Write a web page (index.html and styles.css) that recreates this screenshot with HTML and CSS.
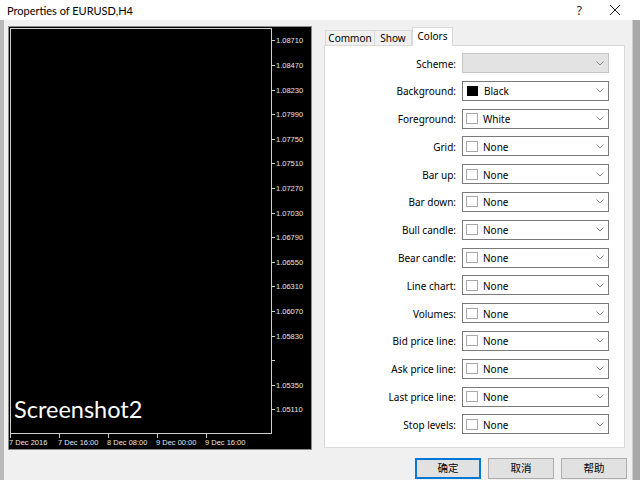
FILE: index.html
```html
<!DOCTYPE html>
<html>
<head>
<meta charset="utf-8">
<link rel="stylesheet" href="styles.css">
</head>
<body>
<div class="window">
  <div class="titlebar">
    <span class="title">Properties of EURUSD,H4</span>
    <span class="tb-btns">
      <span class="tb-help">?</span>
      <svg class="tb-close" width="12" height="12" viewBox="0 0 12 12"><path d="M1 1L11 11M11 1L1 11" stroke="#222" stroke-width="1" fill="none"/></svg>
    </span>
  </div>
  <div class="frame">
    <div class="edge-l"></div>
    <div class="content">
      <div class="main">
        <div class="chart">
          <div class="plot"><span class="watermark">Screenshot2</span></div>
          <div class="price-axis">
            <div class="pr"><i></i><span>1.08710</span></div>
            <div class="pr"><i></i><span>1.08470</span></div>
            <div class="pr"><i></i><span>1.08230</span></div>
            <div class="pr"><i></i><span>1.07990</span></div>
            <div class="pr"><i></i><span>1.07750</span></div>
            <div class="pr"><i></i><span>1.07510</span></div>
            <div class="pr"><i></i><span>1.07270</span></div>
            <div class="pr"><i></i><span>1.07030</span></div>
            <div class="pr"><i></i><span>1.06790</span></div>
            <div class="pr"><i></i><span>1.06550</span></div>
            <div class="pr"><i></i><span>1.06310</span></div>
            <div class="pr"><i></i><span>1.06070</span></div>
            <div class="pr"><i></i><span>1.05830</span></div>
            <div class="pr"><i></i><span></span></div>
            <div class="pr"><i></i><span>1.05350</span></div>
            <div class="pr"><i></i><span>1.05110</span></div>
          </div>
          <div class="time-axis">
            <div class="tm"><i></i><span>7 Dec 2016</span></div>
            <div class="tm"><i></i><span>7 Dec 16:00</span></div>
            <div class="tm"><i></i><span>8 Dec 08:00</span></div>
            <div class="tm"><i></i><span>9 Dec 00:00</span></div>
            <div class="tm"><i></i><span>9 Dec 16:00</span></div>
          </div>
        </div>
        <div class="props">
          <div class="tabs">
            <div class="tab">Common</div>
            <div class="tab">Show</div>
            <div class="tab active">Colors</div>
          </div>
          <div class="panel">
            <label>Scheme:</label>
            <div class="select disabled"><span class="val"></span><svg class="chev" width="8" height="5" viewBox="0 0 8 5"><path d="M0.5 0.5L4 4L7.5 0.5" stroke="#8a8a8a" fill="none"/></svg></div>
            <label>Background:</label>
            <div class="select"><span class="sw black"></span><span class="val">Black</span><svg class="chev" width="8" height="5" viewBox="0 0 8 5"><path d="M0.5 0.5L4 4L7.5 0.5" stroke="#8a8a8a" fill="none"/></svg></div>
            <label>Foreground:</label>
            <div class="select"><span class="sw"></span><span class="val">White</span><svg class="chev" width="8" height="5" viewBox="0 0 8 5"><path d="M0.5 0.5L4 4L7.5 0.5" stroke="#8a8a8a" fill="none"/></svg></div>
            <label>Grid:</label>
            <div class="select"><span class="sw"></span><span class="val">None</span><svg class="chev" width="8" height="5" viewBox="0 0 8 5"><path d="M0.5 0.5L4 4L7.5 0.5" stroke="#8a8a8a" fill="none"/></svg></div>
            <label>Bar up:</label>
            <div class="select"><span class="sw"></span><span class="val">None</span><svg class="chev" width="8" height="5" viewBox="0 0 8 5"><path d="M0.5 0.5L4 4L7.5 0.5" stroke="#8a8a8a" fill="none"/></svg></div>
            <label>Bar down:</label>
            <div class="select"><span class="sw"></span><span class="val">None</span><svg class="chev" width="8" height="5" viewBox="0 0 8 5"><path d="M0.5 0.5L4 4L7.5 0.5" stroke="#8a8a8a" fill="none"/></svg></div>
            <label>Bull candle:</label>
            <div class="select"><span class="sw"></span><span class="val">None</span><svg class="chev" width="8" height="5" viewBox="0 0 8 5"><path d="M0.5 0.5L4 4L7.5 0.5" stroke="#8a8a8a" fill="none"/></svg></div>
            <label>Bear candle:</label>
            <div class="select"><span class="sw"></span><span class="val">None</span><svg class="chev" width="8" height="5" viewBox="0 0 8 5"><path d="M0.5 0.5L4 4L7.5 0.5" stroke="#8a8a8a" fill="none"/></svg></div>
            <label>Line chart:</label>
            <div class="select"><span class="sw"></span><span class="val">None</span><svg class="chev" width="8" height="5" viewBox="0 0 8 5"><path d="M0.5 0.5L4 4L7.5 0.5" stroke="#8a8a8a" fill="none"/></svg></div>
            <label>Volumes:</label>
            <div class="select"><span class="sw"></span><span class="val">None</span><svg class="chev" width="8" height="5" viewBox="0 0 8 5"><path d="M0.5 0.5L4 4L7.5 0.5" stroke="#8a8a8a" fill="none"/></svg></div>
            <label>Bid price line:</label>
            <div class="select"><span class="sw"></span><span class="val">None</span><svg class="chev" width="8" height="5" viewBox="0 0 8 5"><path d="M0.5 0.5L4 4L7.5 0.5" stroke="#8a8a8a" fill="none"/></svg></div>
            <label>Ask price line:</label>
            <div class="select"><span class="sw"></span><span class="val">None</span><svg class="chev" width="8" height="5" viewBox="0 0 8 5"><path d="M0.5 0.5L4 4L7.5 0.5" stroke="#8a8a8a" fill="none"/></svg></div>
            <label>Last price line:</label>
            <div class="select"><span class="sw"></span><span class="val">None</span><svg class="chev" width="8" height="5" viewBox="0 0 8 5"><path d="M0.5 0.5L4 4L7.5 0.5" stroke="#8a8a8a" fill="none"/></svg></div>
            <label>Stop levels:</label>
            <div class="select"><span class="sw"></span><span class="val">None</span><svg class="chev" width="8" height="5" viewBox="0 0 8 5"><path d="M0.5 0.5L4 4L7.5 0.5" stroke="#8a8a8a" fill="none"/></svg></div>
          </div>
        </div>
      </div>
      <div class="buttons">
        <button class="btn default">确定</button>
        <button class="btn">取消</button>
        <button class="btn">帮助</button>
      </div>
    </div>
    <div class="edge-r"></div>
  </div>
</div>
</body>
</html>
```

FILE: styles.css
```css
* { box-sizing: border-box; }
html, body { margin: 0; padding: 0; }
body {
  width: 640px;
  height: 480px;
  overflow: hidden;
  background: #f0f0f0;
  font-family: "Noto Sans", "Liberation Sans", sans-serif;
  color: #000;
}
.window { display: flex; flex-direction: column; width: 640px; height: 480px; }
.titlebar {
  height: 20px;
  background: #fff;
  display: flex;
  align-items: center;
  justify-content: space-between;
  padding-left: 7px;
}
.title { font-family: "Lato", "Noto Sans", sans-serif; font-size: 11px; color: #000; }
.tb-btns { display: flex; align-items: center; }
.tb-help { font-size: 12px; margin-right: 27px; color: #222; }
.tb-close { margin-right: 19px; }
.frame { flex: 1; display: flex; }
.edge-l { width: 4px; background: #b9b9b9; }
.edge-r { width: 8px; background: #a9a9a9; border-left: 1px solid #d0d0d0; }
.content {
  flex: 1;
  display: flex;
  flex-direction: column;
  padding: 6px 0 0 4px;
}
.main { display: flex; align-items: flex-start; }

/* chart */
.chart {
  width: 304px;
  height: 424px;
  background: #000;
  border: 1px solid #8c8c8c;
  padding: 1px;
  display: grid;
  grid-template-columns: 262px 1fr;
  grid-template-rows: 406px 1fr;
  font-family: "Liberation Sans", sans-serif;
  font-size: 7.5px;
  color: #e6e6e6;
}
.plot {
  border: 1px solid #cfcfcf;
  position: relative;
}
.watermark {
  position: absolute;
  left: 3px;
  bottom: 12px;
  font-family: "Lato", "Open Sans", sans-serif;
  font-size: 23.5px;
  line-height: 24px;
  color: #fff;
}
.price-axis { display: flex; flex-direction: column; padding-top: 0.7px; }
.pr { height: 24.6px; display: flex; align-items: center; flex-shrink: 0; }
.pr i { display: block; width: 3px; height: 1px; background: #cfcfcf; margin-right: 1px; }
.time-axis { grid-column: 1 / 3; display: flex; }
.tm { width: 49px; display: flex; flex-direction: column; align-items: flex-start; }
.tm i { display: block; width: 1px; height: 4px; background: #cfcfcf; }
.tm span { margin-left: -1px; line-height: 9px; white-space: nowrap; }

/* properties */
.props { margin-left: 12px; width: 301px; display: flex; flex-direction: column; margin-top: 1px; }
.tabs { display: flex; align-items: flex-end; height: 18px; padding-left: 1px; font-size: 10px; position: relative; z-index: 1; }
.tab {
  height: 15px;
  border: 1px solid #d9d9d9;
  border-bottom: none;
  background: #f0f0f0;
  display: flex;
  align-items: center;
  justify-content: center;
  color: #000;
}
.tab:nth-child(1) { width: 50px; }
.tab:nth-child(2) { width: 37px; border-left: none; }
.tab.active {
  width: 41px;
  height: 19px;
  background: #fff;
  margin-bottom: -1px;
  border-left: 1px solid #d9d9d9;
  padding-bottom: 3px;
}
.panel {
  height: 403px;
  background: #fff;
  border: 1px solid #d9d9d9;
  padding-top: 7px;
  display: grid;
  grid-template-columns: 131px 147px;
  column-gap: 6px;
  row-gap: 7.8px;
  grid-auto-rows: 20px;
  align-content: start;
  font-size: 10px;
}
.panel label { text-align: right; align-self: center; line-height: 12px; padding-top: 1px; }
.select {
  border: 1px solid #7a7a7a;
  background: #fff;
  display: flex;
  align-items: center;
  padding: 0 4px 0 3px;
}
.select.disabled { background: #e3e3e3; border-color: #c6c6c6; }
.sw { width: 12px; height: 11px; border: 1px solid #a8a8a8; background: #fff; margin-right: 5px; }
.sw.black { background: #000; border-color: #000; width: 11px; height: 10px; margin-right: 6px; margin-left: 1px; }
.val { flex: 1; line-height: 12px; padding-top: 1px; }
.chev { flex-shrink: 0; }

/* buttons */
.buttons { display: flex; justify-content: flex-end; gap: 7px; margin-top: 8px; padding-right: 5px; }
.btn {
  width: 66px;
  height: 21px;
  background: #e1e1e1;
  border: 1px solid #adadad;
  font-family: "Noto Sans CJK SC", sans-serif;
  font-size: 10.5px;
  color: #000;
  padding: 0;
  line-height: 1;
}
.btn.default { border: 2px solid #0078d7; }
```
